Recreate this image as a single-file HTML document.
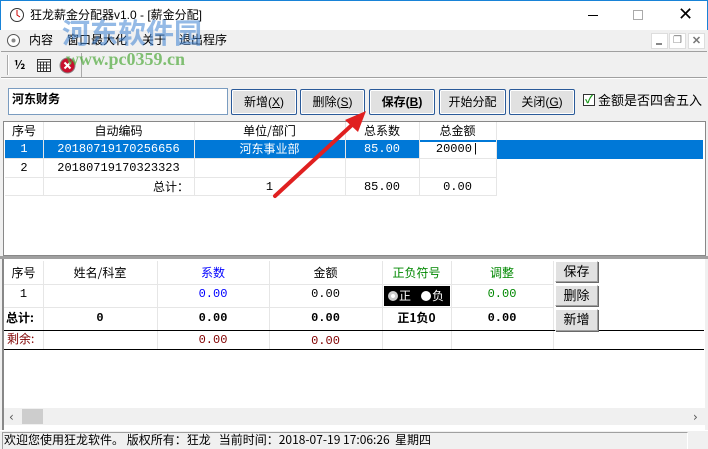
<!DOCTYPE html>
<html><head><meta charset="utf-8"><style>
*{margin:0;padding:0;box-sizing:border-box}
body{width:708px;height:449px;position:relative;overflow:hidden;background:#f0f0f0;font-family:"Liberation Sans","Noto Sans CJK SC",sans-serif;font-size:12px;color:#000}
.a{position:absolute}
.t{position:absolute;white-space:nowrap;font-family:"SimSun","Noto Sans CJK SC",sans-serif;font-size:12px;line-height:14px}
.btn{position:absolute;background:#e1e1e1;border:1px solid #adadad;border-radius:2px;box-shadow:inset 0 0 0 1px #fff;text-align:center;font-size:12px;line-height:24px;font-family:"Liberation Sans","Noto Sans CJK SC",sans-serif}
.btn.f{border:1px solid #2a5a99}
.c{position:absolute;text-align:center;font-size:12px;line-height:18px;white-space:nowrap;font-family:"Liberation Mono","Noto Sans CJK SC",monospace}
.vl{position:absolute;width:1px;background:#e6e6e6}
.hl{position:absolute;height:1px;background:#e6e6e6}
.sb{position:absolute;background:#e1e1e1;border:1px solid #a0a0a0;border-top-color:#fff;border-left-color:#fff;box-shadow:1px 1px 0 #696969;text-align:center;line-height:19px;font-size:13px;font-family:"Liberation Sans","Noto Sans CJK SC",sans-serif}
</style></head><body>
<!-- title bar -->
<div class="a" style="left:0;top:0;width:708px;height:30px;background:#fff;border:1px solid #1883d7;border-bottom:none"></div>
<svg class="a" style="left:9px;top:7px" width="16" height="16"><circle cx="8" cy="8" r="6.5" fill="#fff" stroke="#333"/><path d="M8 3v5l3 2" stroke="#c00" fill="none"/></svg>
<div class="t" style="left:30px;top:8px;font-size:12px;font-family:'Liberation Sans','Noto Sans CJK SC',sans-serif">狂龙薪金分配器v1.0 - [薪金分配]</div>
<div class="a" style="left:588px;top:15px;width:10px;height:1px;background:#000"></div>
<div class="a" style="left:633px;top:10px;width:10px;height:10px;border:1px solid #aaa"></div>
<div class="t" style="left:678px;top:5px;font-size:18px;line-height:20px;font-family:'DejaVu Sans'">✕</div>
<!-- menu -->
<div class="a" style="left:1px;top:30px;width:706px;height:21px;background:#f0f0f0"></div>
<svg class="a" style="left:6px;top:33px" width="15" height="15"><circle cx="7.5" cy="7.5" r="6" fill="#fff" stroke="#555"/><circle cx="7.5" cy="7.5" r="2" fill="#888"/></svg>
<div class="t" style="left:29px;top:33px;font-family:'Liberation Sans','Noto Sans CJK SC',sans-serif">内容</div>
<div class="t" style="left:67px;top:33px;font-family:'Liberation Sans','Noto Sans CJK SC',sans-serif">窗口最大化</div>
<div class="t" style="left:142px;top:33px;font-family:'Liberation Sans','Noto Sans CJK SC',sans-serif">关于</div>
<div class="t" style="left:179px;top:33px;font-family:'Liberation Sans','Noto Sans CJK SC',sans-serif">退出程序</div>
<div class="a" style="left:651px;top:33px;width:17px;height:16px;background:#fff;border:1px solid #ddd"></div>
<div class="a" style="left:656px;top:43px;width:6px;height:2px;background:#888"></div>
<div class="a" style="left:669px;top:33px;width:17px;height:16px;background:#fff;border:1px solid #ddd;font-size:10px;text-align:center;color:#777;line-height:14px">❐</div>
<div class="a" style="left:688px;top:33px;width:17px;height:16px;background:#fff;border:1px solid #ddd;font-size:11px;text-align:center;color:#777;line-height:14px;font-weight:bold">✕</div>
<div class="a" style="left:1px;top:51px;width:706px;height:1px;background:#a0a0a0"></div>
<!-- toolbar -->
<div class="a" style="left:7px;top:55px;width:2px;height:20px;border-left:1px solid #aaa;border-right:1px solid #fff"></div>
<div class="t" style="left:14px;top:58px;font-weight:bold">½</div>
<svg class="a" style="left:37px;top:59px" width="14" height="13"><rect x="0.5" y="0.5" width="13" height="12" fill="#fff" stroke="#333"/><path d="M0 3h14M3.5 3v10M6.5 3v10M9.5 3v10M0 6h14M0 9h14" stroke="#333"/></svg>
<svg class="a" style="left:59px;top:57px" width="17" height="17"><circle cx="8.5" cy="8.5" r="7.5" fill="#c8102e" stroke="#888"/><path d="M5.5 5.5l6 6M11.5 5.5l-6 6" stroke="#fff" stroke-width="2"/></svg>
<div class="a" style="left:81px;top:53px;width:1px;height:24px;background:#aaa"></div>
<div class="a" style="left:1px;top:77px;width:706px;height:2px;border-top:1px solid #a0a0a0;border-bottom:1px solid #fff"></div>
<!-- form row -->
<div class="a" style="left:8px;top:88px;width:220px;height:27px;background:#fff;border:1px solid #7a9cc0"></div>
<div class="t" style="left:12px;top:92px;font-weight:bold;font-family:'Noto Sans CJK SC',sans-serif">河东财务</div>
<div class="btn f" style="left:231px;top:89px;width:66px;height:26px">新增(<u>X</u>)</div>
<div class="btn f" style="left:300px;top:89px;width:65px;height:26px">删除(<u>S</u>)</div>
<div class="btn f" style="left:369px;top:89px;width:66px;height:26px;font-weight:bold">保存(<u>B</u>)</div>
<div class="btn f" style="left:439px;top:89px;width:67px;height:26px">开始分配</div>
<div class="btn f" style="left:509px;top:89px;width:66px;height:26px">关闭(<u>G</u>)</div>
<div class="a" style="left:583px;top:94px;width:12px;height:12px;background:#fff;border:1px solid #333;color:#1a9b1a;font-size:11px;line-height:10px;text-align:center;font-weight:bold">✓</div>
<div class="t" style="left:598px;top:93px;font-size:13px;font-family:'Noto Sans CJK SC',sans-serif">金额是否四舍五入</div>
<!-- grid 1 -->
<div class="a" style="left:3px;top:121px;width:703px;height:135px;background:#fff;border:1px solid #888"></div>
<div class="a" style="left:5px;top:140px;width:698px;height:19px;background:#0078d7"></div>
<div class="a" style="left:420px;top:140px;width:76px;height:19px;background:#fff;border-top:2px solid #0078d7"></div>
<div class="vl" style="left:43px;top:122px;height:74px"></div>
<div class="vl" style="left:194px;top:122px;height:74px"></div>
<div class="vl" style="left:345px;top:122px;height:74px"></div>
<div class="vl" style="left:419px;top:122px;height:74px"></div>
<div class="vl" style="left:496px;top:122px;height:74px"></div>
<div class="hl" style="left:5px;top:158px;width:491px"></div>
<div class="hl" style="left:5px;top:177px;width:491px"></div>
<div class="hl" style="left:5px;top:195px;width:491px"></div>
<div class="c" style="left:5px;top:122px;width:38px;font-family:'Noto Sans CJK SC'">序号</div>
<div class="c" style="left:43px;top:122px;width:151px;font-family:'Noto Sans CJK SC'">自动编码</div>
<div class="c" style="left:194px;top:122px;width:151px;font-family:'Noto Sans CJK SC'">单位/部门</div>
<div class="c" style="left:345px;top:122px;width:74px;font-family:'Noto Sans CJK SC'">总系数</div>
<div class="c" style="left:419px;top:122px;width:77px;font-family:'Noto Sans CJK SC'">总金额</div>
<div class="c" style="left:5px;top:140px;width:38px;color:#fff">1</div>
<div class="c" style="left:43px;top:140px;width:151px;color:#fff">20180719170256656</div>
<div class="c" style="left:194px;top:140px;width:151px;color:#fff;font-family:'Noto Sans CJK SC'">河东事业部</div>
<div class="c" style="left:345px;top:140px;width:74px;color:#fff">85.00</div>
<div class="c" style="left:419px;top:140px;width:77px">20000|</div>
<div class="c" style="left:5px;top:159px;width:38px">2</div>
<div class="c" style="left:43px;top:159px;width:151px">20180719170323323</div>
<div class="c" style="left:43px;top:178px;width:146px;text-align:right;font-family:'Noto Sans CJK SC'">总计：</div>
<div class="c" style="left:194px;top:178px;width:151px">1</div>
<div class="c" style="left:345px;top:178px;width:74px">85.00</div>
<div class="c" style="left:419px;top:178px;width:77px">0.00</div>
<!-- splitter -->
<div class="a" style="left:0;top:256px;width:708px;height:3px;background:#a0a0a0"></div>
<!-- grid 2 -->
<div class="a" style="left:2px;top:259px;width:703px;height:171px;background:#fff;border-left:2px solid #888"></div>
<div class="vl" style="left:43px;top:261px;height:88px"></div>
<div class="vl" style="left:157px;top:261px;height:88px"></div>
<div class="vl" style="left:269px;top:261px;height:88px"></div>
<div class="vl" style="left:382px;top:261px;height:88px"></div>
<div class="vl" style="left:451px;top:261px;height:88px"></div>
<div class="vl" style="left:553px;top:261px;height:88px"></div>
<div class="hl" style="left:4px;top:284px;width:549px"></div>
<div class="hl" style="left:4px;top:307px;width:549px"></div>
<div class="a" style="left:4px;top:330px;width:700px;height:1px;background:#000"></div>
<div class="a" style="left:4px;top:349px;width:700px;height:1px;background:#000"></div>
<div class="c" style="left:4px;top:264px;width:39px;font-family:'Noto Sans CJK SC'">序号</div>
<div class="c" style="left:43px;top:264px;width:114px;font-family:'Noto Sans CJK SC'">姓名/科室</div>
<div class="c" style="left:157px;top:264px;width:112px;color:#00f;font-family:'Noto Sans CJK SC'">系数</div>
<div class="c" style="left:269px;top:264px;width:113px;font-family:'Noto Sans CJK SC'">金额</div>
<div class="c" style="left:382px;top:264px;width:69px;color:#080;font-family:'Noto Sans CJK SC'">正负符号</div>
<div class="c" style="left:451px;top:264px;width:102px;color:#080;font-family:'Noto Sans CJK SC'">调整</div>
<div class="c" style="left:4px;top:285px;width:39px">1</div>
<div class="c" style="left:157px;top:285px;width:112px;color:#00f">0.00</div>
<div class="c" style="left:269px;top:285px;width:113px">0.00</div>
<div class="a" style="left:384px;top:286px;width:66px;height:20px;background:#000"></div>
<div class="a" style="left:388px;top:291px;width:10px;height:10px;border-radius:50%;background:#fff;border:3px solid #ccc"></div>
<div class="t" style="left:399px;top:289px;color:#fff;font-family:'Noto Sans CJK SC'">正</div>
<div class="a" style="left:421px;top:291px;width:10px;height:10px;border-radius:50%;background:#fff"></div>
<div class="t" style="left:432px;top:289px;color:#fff;font-family:'Noto Sans CJK SC'">负</div>
<div class="c" style="left:451px;top:285px;width:102px;color:#080">0.00</div>
<div class="c" style="left:6px;top:309px;width:40px;font-weight:bold;text-align:left;font-family:'Noto Sans CJK SC'">总计:</div>
<div class="c" style="left:43px;top:309px;width:114px;font-weight:bold">0</div>
<div class="c" style="left:157px;top:309px;width:112px;font-weight:bold">0.00</div>
<div class="c" style="left:269px;top:309px;width:113px;font-weight:bold">0.00</div>
<div class="c" style="left:382px;top:309px;width:69px;font-weight:bold;font-family:'Noto Sans CJK SC'">正1负0</div>
<div class="c" style="left:451px;top:309px;width:102px;font-weight:bold">0.00</div>
<div class="c" style="left:7px;top:330px;width:40px;text-align:left;color:#800000;font-family:'Noto Sans CJK SC'">剩余:</div>
<div class="c" style="left:157px;top:331px;width:112px;color:#800000">0.00</div>
<div class="c" style="left:269px;top:332px;width:113px;color:#800000">0.00</div>
<div class="sb" style="left:555px;top:261px;width:43px;height:21px">保存</div>
<div class="sb" style="left:555px;top:285px;width:43px;height:21px">删除</div>
<div class="sb" style="left:555px;top:309px;width:43px;height:22px">新增</div>
<!-- scrollbar -->
<div class="a" style="left:4px;top:408px;width:701px;height:17px;background:#f0f0f0"></div>
<div class="a" style="left:22px;top:409px;width:21px;height:15px;background:#cdcdcd"></div>
<div class="t" style="left:9px;top:410px;color:#555;font-family:'DejaVu Sans'">‹</div>
<div class="t" style="left:693px;top:410px;color:#555;font-family:'DejaVu Sans'">›</div>
<!-- status bar -->
<div class="a" style="left:0;top:430px;width:708px;height:19px;background:#f0f0f0;border-top:1px solid #fff"></div>
<div class="a" style="left:2px;top:432px;width:686px;height:17px;border:1px solid #a0a0a0;border-right-color:#fff;border-bottom:none"></div>
<div class="t" style="left:4px;top:433px;font-family:'Noto Sans CJK SC',sans-serif">欢迎您使用狂龙软件。 版权所有：狂龙&nbsp;&nbsp; 当前时间：2018-07-19 17:06:26&nbsp; 星期四</div>
<!-- watermark -->
<div class="t" style="left:62px;top:16px;font-size:28px;line-height:32px;color:rgba(60,130,210,0.55);font-weight:bold;font-family:'Noto Sans CJK SC'">河东软件园</div>
<div class="t" style="left:66px;top:49px;font-size:18px;line-height:20px;color:rgba(80,170,60,0.7);font-weight:bold;font-family:'Liberation Serif',serif">www.pc0359.cn</div>
<svg class="a" style="left:0;top:0" width="708" height="449"><path d="M275 196L353 124" stroke="#e02020" stroke-width="4" stroke-linecap="round"/><path d="M366 111L345 120L358 132Z" fill="#e02020"/></svg>
</body></html>
